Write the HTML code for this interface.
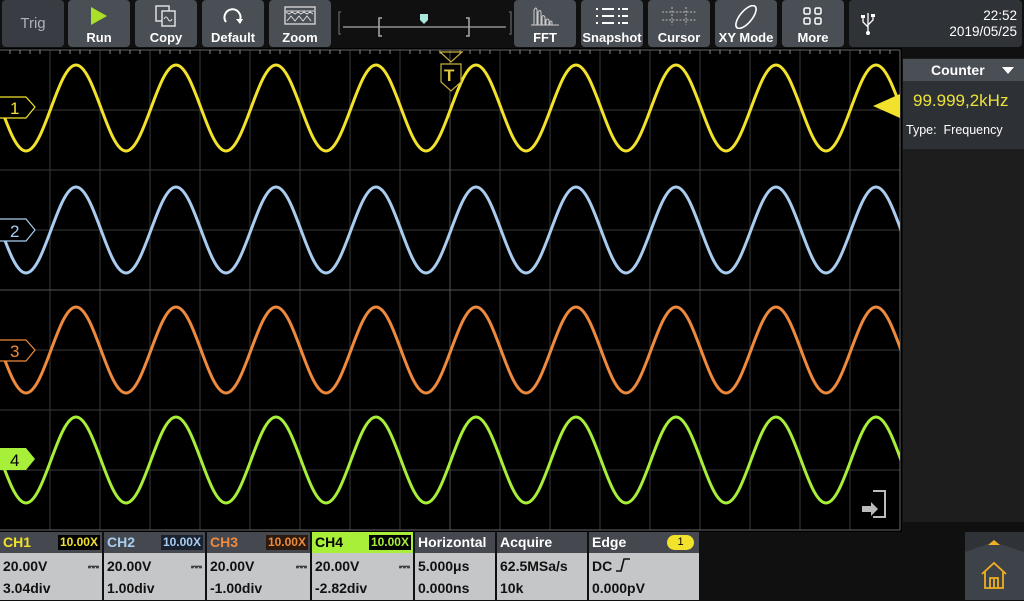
<!DOCTYPE html>
<html><head><meta charset="utf-8"><style>
*{margin:0;padding:0;box-sizing:border-box}
body{width:1024px;height:600px;background:#101010;overflow:hidden;position:relative;font-family:"Liberation Sans",sans-serif}
.b{position:absolute;top:0;height:47px;background:#4a4e55;border-radius:4px;color:#fff;font-weight:bold;font-size:13px;text-align:center}
.b span{position:absolute;bottom:2px;left:0;right:0}
.b svg{position:absolute;left:50%;top:5px;transform:translateX(-50%)}
.box{position:absolute;top:532px;height:68px;background:#c4c6c8}
.box .h{height:21px;background:#45494f;font-weight:bold;font-size:14px;padding:2px 3px;position:relative}
.box .v{font-weight:bold;font-size:14px;color:#111;padding:2px 3px;line-height:22px;position:relative}
.tag{position:absolute;right:2px;top:3px;font-size:12px;padding:0 2px;line-height:15px}
</style></head><body>
<div class="b" style="left:2px;width:62px;background:#393d43;color:#a9b3b8;font-weight:normal;font-size:15px"><span style="bottom:15px">Trig</span></div>
<div class="b" style="left:68px;width:62px"><svg width="20" height="22"><polygon points="2,2 18,11 2,20" fill="#a8e02a"/></svg><span>Run</span></div>
<div class="b" style="left:135px;width:62px"><svg width="24" height="22"><rect x="2" y="1" width="13" height="15" fill="none" stroke="#ddd" stroke-width="1.5"/><rect x="8" y="6" width="13" height="15" fill="#4a4e55" stroke="#ddd" stroke-width="1.5"/><path d="M10,14 q2,-4 4,0 t4,0" fill="none" stroke="#ddd"/></svg><span>Copy</span></div>
<div class="b" style="left:202px;width:62px"><svg width="24" height="22"><path d="M5,17 A8,8 0 1 1 19,15" fill="none" stroke="#fff" stroke-width="2"/><polygon points="15,14 22,14 19,19" fill="#fff"/></svg><span>Default</span></div>
<div class="b" style="left:269px;width:62px"><svg width="32" height="22"><rect x="1" y="2" width="30" height="17" fill="none" stroke="#ddd" stroke-width="1.3"/><path d="M2,6 h28 M2,7 l3,2 3,-2 3,2 3,-2 3,2 3,-2 3,2 3,-2 3,2 M3,16 l4,-5 4,5 4,-5 4,5 4,-5 4,5" fill="none" stroke="#ddd"/></svg><span>Zoom</span></div>
<svg style="position:absolute;left:338px;top:8px" width="174" height="30"><path d="M3,4 h-2 v22 h2" stroke="#555" fill="none" stroke-width="1.5"/><path d="M171,4 h2 v22 h-2" stroke="#555" fill="none" stroke-width="1.5"/><line x1="5" y1="19" x2="168" y2="19" stroke="#aaa" stroke-width="1.2"/><path d="M44,10 h-3 v18 h3 M128,10 h3 v18 h-3" stroke="#aaa" fill="none" stroke-width="1.5"/><path d="M82,6 h8 v6 l-4,4 l-4,-4z" fill="#a8e8dc"/></svg>
<div class="b" style="left:514px;width:62px"><svg width="32" height="22"><path d="M2,20 h28 M5,20 V5 q2,-4 3,0 V20 M9,20 V7 q2,-3 3,0 V20 M13,20 V12 q1,-3 3,0 V20 M17,20 V15 q1,-2 3,0 V20 M21,20 V17 q1,-2 2,0 V20" fill="none" stroke="#ccc"/></svg><span>FFT</span></div>
<div class="b" style="left:581px;width:62px"><svg width="36" height="22"><g stroke="#fff" stroke-width="2"><path d="M2,4 h2 M8,4 h12 M24,4 h2 M28,4 h6 M2,11 h2 M8,11 h12 M24,11 h2 M28,11 h6 M2,18 h2 M8,18 h12 M24,18 h2 M28,18 h6"/></g></svg><span>Snapshot</span></div>
<div class="b" style="left:648px;width:62px"><svg width="36" height="22"><g stroke="#bbb" stroke-dasharray="2,1.5"><path d="M1,7 h34 M1,15 h34 M11,2 v18 M25,2 v18"/></g></svg><span>Cursor</span></div>
<div class="b" style="left:715px;width:62px"><svg width="30" height="24"><ellipse cx="15" cy="12" rx="14" ry="6" transform="rotate(-50 15 12)" fill="none" stroke="#fff" stroke-width="1.6"/></svg><span>XY Mode</span></div>
<div class="b" style="left:782px;width:62px"><svg width="24" height="22"><g fill="none" stroke="#fff" stroke-width="1.5"><rect x="3" y="3" width="6" height="6" rx="1.5"/><rect x="14" y="3" width="6" height="6" rx="1.5"/><rect x="3" y="13" width="6" height="6" rx="1.5"/><rect x="14" y="13" width="6" height="6" rx="1.5"/></g></svg><span>More</span></div>
<div class="b" style="left:849px;width:173px;background:#2f3237;font-weight:normal;font-size:13.5px;text-align:right;padding:8px 5px 0 0;line-height:16px">22:52<br>2019/05/25
<svg style="left:12px;top:12px;transform:none" width="14" height="24"><path d="M7,1 V21 M7,15 L2,10 V6 M7,13 L12,8 V5" stroke="#fff" fill="none" stroke-width="1.3"/><circle cx="7" cy="21" r="2" fill="#fff"/><rect x="0" y="3" width="4" height="3" fill="#fff"/><rect x="10" y="2" width="4" height="3" fill="#fff"/></svg></div>

<svg style="position:absolute;left:0;top:48px" width="902" height="484">
<rect width="902" height="484" fill="#000"/>
<g stroke="#3a3a3a" stroke-width="1">
<path d="M50,2V482M100,2V482M150,2V482M200,2V482M250,2V482M300,2V482M350,2V482M400,2V482M500,2V482M550,2V482M600,2V482M650,2V482M700,2V482M750,2V482M800,2V482M850,2V482"/>
<path d="M0,62H900M0,122H900M0,182H900M0,302H900M0,362H900M0,422H900"/>
</g>
<path d="M450,2V482M0,242H900" stroke="#555"/>
<path d="M0,2H900M900,2V482M0,482H900" stroke="#666"/>
<g stroke="#888"><path d="M10,2v4M20,2v4M30,2v4M40,2v4M60,2v4M70,2v4M80,2v4M90,2v4M110,2v4M120,2v4M130,2v4M140,2v4M160,2v4M170,2v4M180,2v4M190,2v4M210,2v4M220,2v4M230,2v4M240,2v4M260,2v4M270,2v4M280,2v4M290,2v4M310,2v4M320,2v4M330,2v4M340,2v4M360,2v4M370,2v4M380,2v4M390,2v4M410,2v4M420,2v4M430,2v4M440,2v4M460,2v4M470,2v4M480,2v4M490,2v4M510,2v4M520,2v4M530,2v4M540,2v4M560,2v4M570,2v4M580,2v4M590,2v4M610,2v4M620,2v4M630,2v4M640,2v4M660,2v4M670,2v4M680,2v4M690,2v4M710,2v4M720,2v4M730,2v4M740,2v4M760,2v4M770,2v4M780,2v4M790,2v4M810,2v4M820,2v4M830,2v4M840,2v4M860,2v4M870,2v4M880,2v4M890,2v4"/></g>
<defs><path id="s" fill="none" stroke-width="3" d="M-24,-43 C-5.8,-43 7.8,43 26,43 S57.8,-43 76,-43 S107.8,43 126,43 S157.8,-43 176,-43 S207.8,43 226,43 S257.8,-43 276,-43 S307.8,43 326,43 S357.8,-43 376,-43 S407.8,43 426,43 S457.8,-43 476,-43 S507.8,43 526,43 S557.8,-43 576,-43 S607.8,43 626,43 S657.8,-43 676,-43 S707.8,43 726,43 S757.8,-43 776,-43 S807.8,43 826,43 S857.8,-43 876,-43 S907.8,43 926,43"/>
<clipPath id="c"><rect x="0" y="2" width="900" height="480"/></clipPath></defs>
<g clip-path="url(#c)">
<use href="#s" stroke="#f3e22c" transform="translate(0,60)"/>
<use href="#s" stroke="#a9cdf0" transform="translate(0,182)"/>
<use href="#s" stroke="#ef8a3d" transform="translate(0,302)"/>
<use href="#s" stroke="#a8ef3a" transform="translate(0,412)"/>
</g>
<g font-family="Liberation Sans" font-size="17">
<path d="M0,49 H26 L35,59 L26,70 H0" fill="#000" stroke="#f3e22c" stroke-width="1.2"/><text x="10" y="66" fill="#f3e22c">1</text>
<path d="M0,171 H26 L35,182 L26,193 H0" fill="#000" stroke="#a9cdf0" stroke-width="1.2"/><text x="10" y="189" fill="#a9cdf0">2</text>
<path d="M0,292 H26 L35,302 L26,313 H0" fill="#000" stroke="#ef8a3d" stroke-width="1.2"/><text x="10" y="309" fill="#ef8a3d">3</text>
<path d="M0,400 H26 L35,411 L26,422 H0" fill="#a8ef3a"/><text x="10" y="418" fill="#000">4</text>
</g>
<path d="M440,4 H462 L451,14Z" fill="none" stroke="#c8b040" stroke-width="1.2"/>
<path d="M441,16 H461 V34 L451,43 L441,34Z" fill="#000" stroke="#c8b040" stroke-width="1.2"/>
<text x="444" y="33" fill="#e0c840" font-size="17" font-weight="bold" font-family="Liberation Sans">T</text>
<polygon points="873,58 900,46 900,70" fill="#f3e22c"/>
<path d="M862,458 h9 v-4 l7,7 -7,7 v-4 h-9z" fill="#bbb"/><path d="M873,443 h12 v26 h-12" fill="none" stroke="#bbb" stroke-width="2"/>
</svg>

<div style="position:absolute;left:903px;top:58px;width:121px;height:464px;background:#1d1d1e"></div>
<div style="position:absolute;left:903px;top:59px;width:121px;height:22px;background:#4a4e55;color:#fff;font-weight:bold;font-size:14px;padding:3px 0 0 28px">Counter<svg style="position:absolute;right:10px;top:8px" width="12" height="8"><polygon points="0,0 12,0 6,7" fill="#fff"/></svg></div>
<div style="position:absolute;left:903px;top:81px;width:121px;height:68px;background:#2d3034;color:#fff"><div style="color:#ece23a;font-size:17px;position:absolute;left:10px;top:10px">99.999,2kHz</div><div style="font-size:12.5px;position:absolute;left:3px;top:42px">Type:&nbsp; Frequency</div></div>

<div class="box" style="left:0;width:102px"><div class="h" style="color:#f3e22c">CH1<span class="tag" style="background:#000;color:#f3e22c">10.00X</span></div><div class="v">20.00V<span style="position:absolute;right:3px">⎓</span><br>3.04div</div></div>
<div class="box" style="left:104px;width:101px"><div class="h" style="color:#a9cdf0">CH2<span class="tag" style="background:#1a2230;color:#a9cdf0">10.00X</span></div><div class="v">20.00V<span style="position:absolute;right:3px">⎓</span><br>1.00div</div></div>
<div class="box" style="left:207px;width:103px"><div class="h" style="color:#ef8a3d">CH3<span class="tag" style="background:#2a1a10;color:#ef8a3d">10.00X</span></div><div class="v">20.00V<span style="position:absolute;right:3px">⎓</span><br>-1.00div</div></div>
<div class="box" style="left:312px;width:101px"><div class="h" style="color:#000;background:#a8ef3a">CH4<span class="tag" style="background:#000;color:#a8ef3a">10.00X</span></div><div class="v">20.00V<span style="position:absolute;right:3px">⎓</span><br>-2.82div</div></div>
<div class="box" style="left:415px;width:80px"><div class="h" style="color:#fff">Horizontal</div><div class="v">5.000μs<br>0.000ns</div></div>
<div class="box" style="left:497px;width:90px"><div class="h" style="color:#fff">Acquire</div><div class="v">62.5MSa/s<br>10k</div></div>
<div class="box" style="left:589px;width:110px"><div class="h" style="color:#fff">Edge<span style="position:absolute;right:5px;top:3px;background:#f3e22c;color:#000;border-radius:8px;font-size:11px;width:27px;height:15px;text-align:center;line-height:15px;font-weight:normal">1</span></div><div class="v">DC <svg width="14" height="14" style="vertical-align:-1px"><path d="M0,13 h5 l3,-12 h6" stroke="#111" fill="none" stroke-width="1.6"/></svg><br>0.000pV</div></div>
<div style="position:absolute;left:965px;top:532px;width:59px;height:68px;background:#2f3338"><svg style="position:absolute;left:0;top:0" width="59" height="68"><polygon points="0,20 29,10 59,20 59,68 0,68" fill="#3e4349"/><polygon points="23,13 29,8 35,13" fill="#f0b020"/><path d="M17,42 L29,31 L41,42 M20,39 V56 H38 V39 M25,56 V46 H33 V56 M29,46 V56" fill="none" stroke="#f0b020" stroke-width="1.8"/></svg></div>
</body></html>
